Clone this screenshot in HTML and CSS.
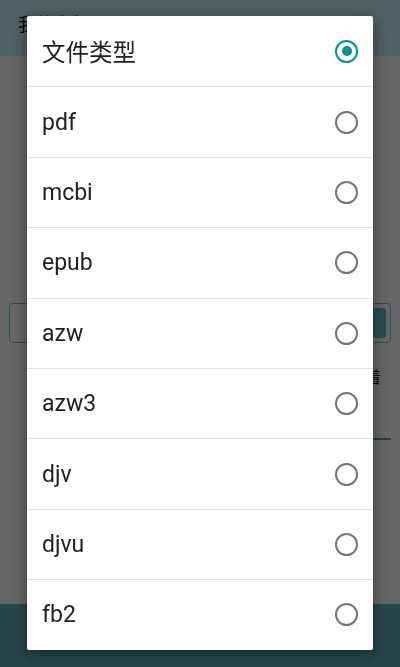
FILE: index.html
```html
<!DOCTYPE html>
<html lang="zh">
<head>
    <meta charset="UTF-8">
    <meta name="viewport" content="width=device-width, initial-scale=1.0">
    <title>文件类型</title>
    <link rel="stylesheet" href="styles.css">
</head>
<body>
    <div class="page">
        <div class="toolbar"><span class="toolbar-title">我的书架</span></div>
        <div class="content">
            <div class="search">
                <div class="search-input"></div>
                <div class="search-btn"></div>
            </div>
            <div class="hint">着</div>
            <div class="dots"></div>
            <div class="underline"></div>
        </div>
        <div class="footer"><span class="footer-text">本应用仅用于学习交流 请勿用于商业用途</span></div>
    </div>

    <div class="overlay"></div>

    <div class="dialog">
        <div class="row title-row">
            <span class="label title">文件类型</span>
            <span class="radio checked"></span>
        </div>
        <div class="row"><span class="label">pdf</span><span class="radio"></span></div>
        <div class="row"><span class="label">mcbi</span><span class="radio"></span></div>
        <div class="row"><span class="label">epub</span><span class="radio"></span></div>
        <div class="row"><span class="label">azw</span><span class="radio"></span></div>
        <div class="row"><span class="label">azw3</span><span class="radio"></span></div>
        <div class="row"><span class="label">djv</span><span class="radio"></span></div>
        <div class="row"><span class="label">djvu</span><span class="radio"></span></div>
        <div class="row"><span class="label">fb2</span><span class="radio"></span></div>
    </div>
</body>
</html>
```

FILE: styles.css
```css
body {
    margin: 0;
    font-family: Roboto, "Noto Sans CJK SC", sans-serif;
    background: #fff;
    overflow: hidden;
}
.page {
    height: 667px;
    display: flex;
    flex-direction: column;
}
.toolbar {
    height: 56px;
    background: #c8f0fa;
    padding-left: 18px;
    display: flex;
    align-items: center;
}
.toolbar-title {
    font-size: 18px;
    color: #222;
    margin-top: -10px;
}
.content {
    flex: 1;
    background: #fff;
    padding: 247px 9px 0 9px;
}
.search {
    height: 40px;
    border: 1px solid #66ccd6;
    border-radius: 4px;
    display: flex;
    padding: 4px;
    box-sizing: border-box;
}
.search-input {
    flex: 1;
}
.search-btn {
    width: 50px;
    background: #66c4c8;
    border-radius: 3px;
}
.hint {
    text-align: right;
    font-size: 16px;
    color: #222;
    margin-top: 21px;
    padding-right: 10px;
}
.dots {
    height: 50px;
}
.underline {
    height: 2px;
    margin-left: 360px;
    background: #5aa0a8;
}
.footer {
    height: 63px;
    background: #60b0b5;
    display: flex;
    justify-content: center;
    padding-top: 24px;
    box-sizing: border-box;
}
.footer-text {
    font-size: 15px;
    color: #444;
}
.overlay {
    position: fixed;
    inset: 0;
    background: rgba(0, 0, 0, 0.6);
}
.dialog {
    position: fixed;
    left: 27px;
    top: 16px;
    width: 346px;
    background: #fff;
    border-radius: 2px;
    box-shadow: 0 4px 16px rgba(0, 0, 0, 0.45);
}
.row {
    height: 70.4px;
    box-sizing: border-box;
    border-top: 1px solid #e2e2e2;
    display: flex;
    align-items: center;
    justify-content: space-between;
    padding: 0 15px 0 15px;
}
.title-row {
    border-top: none;
}
.label {
    font-size: 23px;
    color: #212121;
}
.title {
    font-size: 23.5px;
    font-family: "Noto Sans CJK SC", sans-serif;
}
.radio {
    width: 19px;
    height: 19px;
    border: 2px solid #757575;
    border-radius: 50%;
    display: flex;
    align-items: center;
    justify-content: center;
}
.radio.checked {
    border-color: #009688;
}
.radio.checked::after {
    content: "";
    width: 10px;
    height: 10px;
    border-radius: 50%;
    background: #009688;
}
```
